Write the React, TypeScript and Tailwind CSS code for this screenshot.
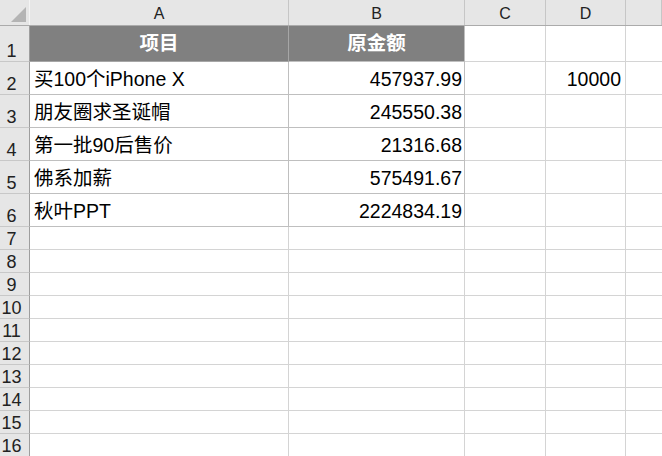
import React from "react";

const cols = ["A", "B", "C", "D", ""];

type Row = { a?: string; b?: string; d?: string; h: string };

const rows: Row[] = [
  { a: "项目", b: "原金额", h: "h-[36px]" },
  { a: "买100个iPhone X", b: "457937.99", d: "10000", h: "h-[33px]" },
  { a: "朋友圈求圣诞帽", b: "245550.38", h: "h-[33px]" },
  { a: "第一批90后售价", b: "21316.68", h: "h-[33px]" },
  { a: "佛系加薪", b: "575491.67", h: "h-[33px]" },
  { a: "秋叶PPT", b: "2224834.19", h: "h-[33px]" },
];

// 7 - 16 are plain empty rows
for (let i = 0; i < 10; i++) rows.push({ h: "h-[23px]" });

const colWidth = ["w-[259px]", "w-[176px]", "w-[81px]", "w-[80px]", "flex-1"];

const App: React.FC = () => {
  return (
    <div
      className="w-[662px] h-[456px] overflow-hidden bg-white text-black"
      style={{ fontFamily: '"Liberation Sans", "Noto Sans CJK SC", sans-serif' }}
    >
      {/* column headers */}
      <div className="flex h-[26px] bg-[#e6e6e6] border-b border-[#ababab]">
        <div className="w-[30px] h-full border-r border-[#f4f4f4] flex items-end justify-end pr-[3px] pb-[3px]">
          <svg width="15" height="15" viewBox="0 0 15 15">
            <polygon points="15,0 15,15 0,15" fill="#b4b4b4" />
          </svg>
        </div>
        {cols.map((c, i) => (
          <div
            key={i}
            className={`${colWidth[i]} h-full border-r border-[#c6c6c6] flex items-center justify-center text-[16px] leading-none pt-[2px] text-[#222]`}
          >
            {c}
          </div>
        ))}
      </div>

      {rows.map((r, i) => {
        const isHead = i === 0;
        const inTable = i < 6;
        return (
          <div key={i} className={`flex ${r.h}`}>
            <div className="w-[30px] h-full bg-[#e6e6e6] border-r border-b border-r-[#9e9e9e] border-b-[#c8c8c8] flex items-end justify-center pr-[6px] pb-[1px] text-[18px] leading-none text-[#222]">
              {i + 1}
            </div>
            <div
              className={`w-[259px] h-full border-r border-b flex whitespace-nowrap ${
                isHead
                  ? "bg-[#808080] text-white font-bold justify-center items-center border-[#a6a6a6]"
                  : inTable
                  ? "items-end pl-[4px] pb-[5px] border-[#bfbfbf]"
                  : "border-[#d4d4d4]"
              } text-[19.5px] leading-none`}
            >
              {r.a}
            </div>
            <div
              className={`w-[176px] h-full border-r border-b flex whitespace-nowrap ${
                isHead
                  ? "bg-[#808080] text-white font-bold justify-center items-center border-[#bfbfbf]"
                  : inTable
                  ? "items-end justify-end pr-[2px] pb-[5px] border-[#bfbfbf]"
                  : "border-[#d4d4d4]"
              } text-[19.5px] leading-none`}
            >
              {r.b}
            </div>
            <div className="w-[81px] h-full border-r border-b border-[#d4d4d4]" />
            <div className="w-[80px] h-full border-r border-b border-[#d4d4d4] flex items-end justify-end pr-[4px] pb-[5px] text-[19.5px] leading-none">
              {r.d}
            </div>
            <div className="flex-1 h-full border-b border-[#d4d4d4]" />
          </div>
        );
      })}
    </div>
  );
};

export default App;
